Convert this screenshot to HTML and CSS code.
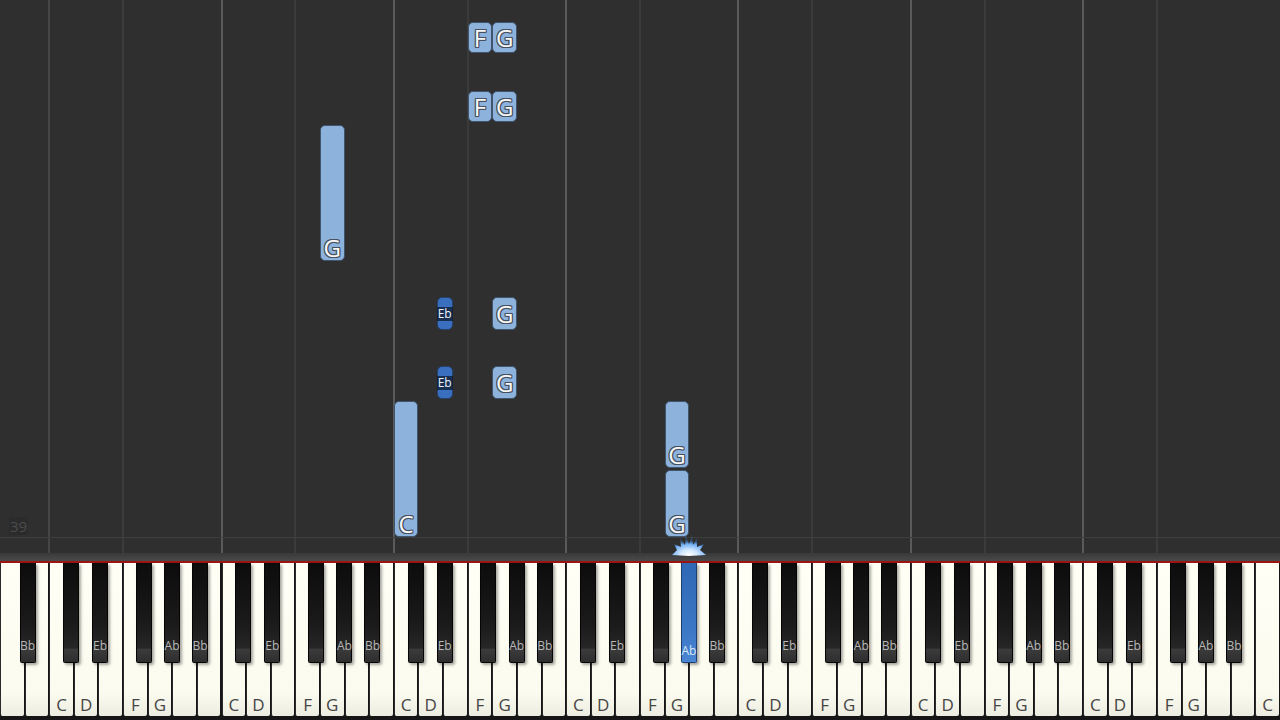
FILE: index.html
```html
<!DOCTYPE html>
<html lang="en">
<head>
<meta charset="utf-8">
<title>Piano roll</title>
<link rel="stylesheet" href="styles.css">
</head>
<body>
<div class="app">
  <div class="roll">
    <div class="cols">
      <div class="col part-start"></div>
      <div class="col oct oct-first"></div>
      <div class="col oct">
        <div class="note w n-g" style="top:125px;height:136px"><span class="lbl">G</span></div>
      </div>
      <div class="col oct">
        <div class="note w short n-f" style="top:22px;height:31px"><span class="lbl">F</span></div>
        <div class="note w short n-g" style="top:22px;height:31px"><span class="lbl">G</span></div>
        <div class="note w short n-f" style="top:91px;height:31px"><span class="lbl">F</span></div>
        <div class="note w short n-g" style="top:91px;height:31px"><span class="lbl">G</span></div>
        <div class="note b n-eb" style="top:297px;height:33px"><span class="lbl">Eb</span></div>
        <div class="note w short n-g" style="top:297px;height:33px"><span class="lbl">G</span></div>
        <div class="note b n-eb" style="top:366px;height:33px"><span class="lbl">Eb</span></div>
        <div class="note w short n-g" style="top:366px;height:33px"><span class="lbl">G</span></div>
        <div class="note w n-c" style="top:401px;height:136px"><span class="lbl">C</span></div>
      </div>
      <div class="col oct">
        <div class="note w n-g" style="top:401px;height:67px"><span class="lbl">G</span></div>
        <div class="note w n-g" style="top:470px;height:67px"><span class="lbl">G</span></div>
      </div>
      <div class="col oct"></div>
      <div class="col oct"></div>
      <div class="col oct"></div>
      <div class="col part-end"></div>
    </div>
    <div class="now-line"></div>
    <span class="measure">39</span>
  </div>
  <div class="bar"></div>
  <div class="keyboard">
    <div class="kgroup part-start">
      <div class="wk"></div><div class="wk"></div>
      <div class="bk k-bb0"><span>Bb</span></div>
    </div>
    <div class="kgroup oct">
      <div class="wk"><span>C</span></div><div class="wk"><span>D</span></div><div class="wk"></div><div class="wk"><span>F</span></div><div class="wk"><span>G</span></div><div class="wk"></div><div class="wk"></div>
      <div class="bk k-cs"></div><div class="bk k-eb"><span>Eb</span></div><div class="bk k-fs"></div><div class="bk k-ab"><span>Ab</span></div><div class="bk k-bb"><span>Bb</span></div>
    </div>
    <div class="kgroup oct">
      <div class="wk"><span>C</span></div><div class="wk"><span>D</span></div><div class="wk"></div><div class="wk"><span>F</span></div><div class="wk"><span>G</span></div><div class="wk"></div><div class="wk"></div>
      <div class="bk k-cs"></div><div class="bk k-eb"><span>Eb</span></div><div class="bk k-fs"></div><div class="bk k-ab"><span>Ab</span></div><div class="bk k-bb"><span>Bb</span></div>
    </div>
    <div class="kgroup oct">
      <div class="wk"><span>C</span></div><div class="wk"><span>D</span></div><div class="wk"></div><div class="wk"><span>F</span></div><div class="wk"><span>G</span></div><div class="wk"></div><div class="wk"></div>
      <div class="bk k-cs"></div><div class="bk k-eb"><span>Eb</span></div><div class="bk k-fs"></div><div class="bk k-ab"><span>Ab</span></div><div class="bk k-bb"><span>Bb</span></div>
    </div>
    <div class="kgroup oct">
      <div class="wk"><span>C</span></div><div class="wk"><span>D</span></div><div class="wk"></div><div class="wk"><span>F</span></div><div class="wk"><span>G</span></div><div class="wk"></div><div class="wk"></div>
      <div class="bk k-cs"></div><div class="bk k-eb"><span>Eb</span></div><div class="bk k-fs"></div><div class="bk k-ab pressed"><span>Ab</span></div><div class="bk k-bb"><span>Bb</span></div>
    </div>
    <div class="kgroup oct">
      <div class="wk"><span>C</span></div><div class="wk"><span>D</span></div><div class="wk"></div><div class="wk"><span>F</span></div><div class="wk"><span>G</span></div><div class="wk"></div><div class="wk"></div>
      <div class="bk k-cs"></div><div class="bk k-eb"><span>Eb</span></div><div class="bk k-fs"></div><div class="bk k-ab"><span>Ab</span></div><div class="bk k-bb"><span>Bb</span></div>
    </div>
    <div class="kgroup oct">
      <div class="wk"><span>C</span></div><div class="wk"><span>D</span></div><div class="wk"></div><div class="wk"><span>F</span></div><div class="wk"><span>G</span></div><div class="wk"></div><div class="wk"></div>
      <div class="bk k-cs"></div><div class="bk k-eb"><span>Eb</span></div><div class="bk k-fs"></div><div class="bk k-ab"><span>Ab</span></div><div class="bk k-bb"><span>Bb</span></div>
    </div>
    <div class="kgroup oct">
      <div class="wk"><span>C</span></div><div class="wk"><span>D</span></div><div class="wk"></div><div class="wk"><span>F</span></div><div class="wk"><span>G</span></div><div class="wk"></div><div class="wk"></div>
      <div class="bk k-cs"></div><div class="bk k-eb"><span>Eb</span></div><div class="bk k-fs"></div><div class="bk k-ab"><span>Ab</span></div><div class="bk k-bb"><span>Bb</span></div>
    </div>
    <div class="kgroup part-end">
      <div class="wk"><span>C</span></div>
    </div>
  </div>
  <svg class="spark" width="36" height="24" viewBox="0 0 36 24" aria-hidden="true">
    <defs>
      <filter id="blur" x="-30%" y="-30%" width="160%" height="160%"><feGaussianBlur stdDeviation="0.7"/></filter>
      <radialGradient id="glow" cx="50%" cy="95%" r="70%">
        <stop offset="0" stop-color="#ffffff"/>
        <stop offset="0.35" stop-color="#d4e9ff"/>
        <stop offset="0.75" stop-color="#70aef2"/>
        <stop offset="1" stop-color="#3a7fd8" stop-opacity="0.3"/>
      </radialGradient>
    </defs>
    <polygon filter="url(#blur)" fill="url(#glow)" points="1,22 6,17 3,11 10,14 9,5 14,12 15,2 18,11 21,2 22,12 26,5 26,14 33,11 29,17 35,22 18,23"/>
  </svg>
</div>
</body>
</html>
```
FILE: styles.css
```css
* { box-sizing: border-box; }
html, body { margin: 0; padding: 0; }
body {
  width: 1280px;
  height: 720px;
  overflow: hidden;
  background: #2f2f2f;
  font-family: "Open Sans", "Noto Sans", "DejaVu Sans", sans-serif;
}
.app {
  position: relative;
  width: 1280px;
  height: 720px;
  display: flex;
  flex-direction: column;
}
.roll {
  position: relative;
  height: 553px;
  background: #2f2f2f;
}
.cols {
  display: grid;
  grid-template-columns: 2fr repeat(7, 7fr) 1fr;
  height: 100%;
}
.col { position: relative; }
.roll .oct::before {
  content: "";
  position: absolute;
  top: 0;
  bottom: 0;
  left: -1px;
  width: 2px;
  background: #5a5a5a;
}
.roll .oct-first::before { background: #464646; }
.roll .oct::after {
  content: "";
  position: absolute;
  top: 0;
  bottom: 0;
  left: calc(300% / 7 - 1px);
  width: 2px;
  background: #3b3b3b;
}
.now-line {
  position: absolute;
  left: 0;
  right: 0;
  top: 537px;
  height: 1px;
  background: #3e3e3e;
}
.measure {
  position: absolute;
  left: 9px;
  top: 517px;
  padding: 0 1px;
  font-size: 15px;
  line-height: 18px;
  color: #4c4c4c;
  background: #2b2b2b;
}

/* notes */
.note {
  position: absolute;
  z-index: 2;
  border-radius: 5px;
  display: flex;
  align-items: flex-end;
  justify-content: center;
}
.note.w {
  width: calc(100% / 7);
  background: #8db3dc;
  border: 1px solid #40546e;
}
.note.w.short { align-items: center; }
.note.b {
  width: 16px;
  background: #3a6fbf;
  border: 1px solid #24406b;
  align-items: center;
}
.n-c { left: 0; }
.n-f { left: calc(300% / 7); }
.n-g { left: calc(400% / 7); }
.n-eb { left: calc(29.5% - 8px); }
.note.w .lbl {
  font-size: 24px;
  line-height: 26px;
  font-weight: 500;
  color: #f8f8f8;
  margin-bottom: -1px;
  text-shadow: 1px 0 0 #46505e, -1px 0 0 #46505e, 0 1px 0 #46505e, 0 -1px 0 #46505e,
               1px 1px 0 #46505e, -1px -1px 0 #46505e, 1px -1px 0 #46505e, -1px 1px 0 #46505e;
}
.note.w.short .lbl { margin-bottom: 0; margin-top: 1px; }
.note.b .lbl {
  font-size: 12px;
  line-height: 14px;
  color: #eef2f8;
  background: rgba(10, 20, 35, 0.7);
  padding: 0 1px;
}

/* divider bar */
.bar {
  height: 8px;
  background: linear-gradient(#393939, #4a4a4a);
}

/* keyboard */
.keyboard {
  flex: 1;
  display: grid;
  grid-template-columns: 2fr repeat(7, 7fr) 1fr;
  border-top: 2px solid #9c1414;
  background: #161616;
}
.kgroup {
  position: relative;
  display: flex;
}
.wk {
  flex: 1;
  height: 153px;
  margin-right: 1px;
  border-left: 1px solid #2a2a2a;
  background: linear-gradient(#fffff6, #fbfbef 85%, #ecece0);
  border-radius: 0 0 2px 2px;
  display: flex;
  align-items: flex-end;
  justify-content: center;
}
.wk span {
  font-size: 17px;
  line-height: 22px;
  color: #454545;
}
.bk {
  position: absolute;
  top: 0;
  width: 16px;
  height: 100px;
  margin-left: -8px;
  z-index: 3;
  background: linear-gradient(#0c0c0c 0%, #1a1a1a 60%, #262626 86%, #3b3b3b 87%, #2e2e2e 100%);
  border: 1px solid #050505;
  border-top: 0;
  border-radius: 0 0 2px 2px;
  box-shadow: 2px 2px 3px rgba(0, 0, 0, 0.35);
  display: flex;
  align-items: flex-end;
  justify-content: center;
  padding-bottom: 9px;
}
.bk span {
  font-size: 12px;
  line-height: 14px;
  color: #b8b8b8;
  text-shadow: 0 0 0 rgba(0, 0, 0, 0.01);
}
.bk.pressed {
  background: linear-gradient(#2f68b4, #3c78c6 70%, #4a86d2);
  border-color: #1d3f70;
}
.bk.pressed span { color: #d8e6f6; margin-bottom: -5px; }
.k-bb0 { left: 56.2%; }
.k-cs { left: 12.65%; }
.k-eb { left: 29.5%; }
.k-fs { left: 54.9%; }
.k-ab { left: 71.3%; }
.k-bb { left: 87.6%; }

.spark {
  position: absolute;
  left: 671px;
  top: 533px;
  z-index: 4;
}
```
